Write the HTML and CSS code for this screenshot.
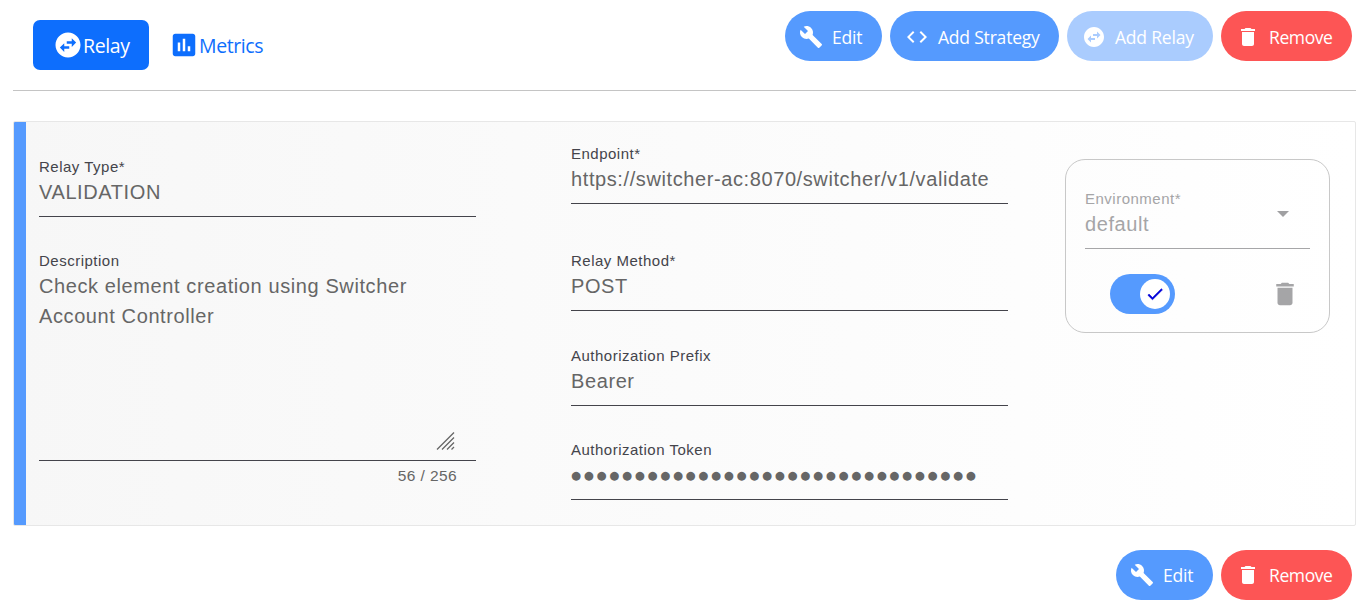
FILE: index.html
```html
<!DOCTYPE html>
<html lang="en">
<head>
<meta charset="utf-8">
<title>Relay</title>
<link rel="stylesheet" href="styles.css">
</head>
<body>
<svg class="sprite" width="0" height="0" aria-hidden="true">
  <symbol id="swap" viewBox="0 0 24 24"><path d="M22 12c0-5.52-4.48-10-10-10S2 6.48 2 12s4.480 10 10 10 10-4.480 10-10zm-7-5.500l3.500 3.500-3.500 3.500V11h-4V9h4V6.500zm-6 11L5.500 14 9 10.500V13h4v2H9v2.500z"/></symbol>
  <symbol id="chart" viewBox="0 0 24 24"><path d="M19 3H5c-1.100 0-2 .9-2 2v14c0 1.100.9 2 2 2h14c1.100 0 2-.9 2-2V5c0-1.100-.9-2-2-2zM9 17H7v-7h2v7zm4 0h-2V7h2v10zm4 0h-2v-4h2v4z"/></symbol>
  <symbol id="build" viewBox="0 0 24 24"><path d="M22.700 19l-9.100-9.100c.9-2.300.4-5-1.500-6.900-2-2-5-2.400-7.400-1.300L9 6 6 9 1.600 4.700C.4 7.100.9 10.100 2.900 12.100c1.900 1.900 4.600 2.400 6.900 1.500l9.100 9.100c.4.4 1 .4 1.400 0l2.300-2.300c.5-.4.5-1.100.1-1.400z"/></symbol>
  <symbol id="code" viewBox="0 0 24 24"><path d="M9.400 16.600L4.800 12l4.600-4.600L8 6l-6 6 6 6 1.400-1.400zm5.200 0l4.600-4.600-4.600-4.600L16 6l6 6-6 6-1.400-1.400z"/></symbol>
  <symbol id="trash" viewBox="0 0 24 24"><path d="M6 19c0 1.100.9 2 2 2h8c1.100 0 2-.9 2-2V7H6v12zM19 4h-3.500l-1-1h-5l-1 1H5v2h14V4z"/></symbol>
</svg>
<header class="toolbar">
  <nav class="tabs">
    <a class="tab tab-active"><svg class="icon-lg"><use href="#swap"/></svg><span>Relay</span></a>
    <a class="tab"><svg class="icon-lg"><use href="#chart"/></svg><span>Metrics</span></a>
  </nav>
  <div class="actions">
    <button class="btn edit"><svg class="icon"><use href="#build"/></svg><span>Edit</span></button>
    <button class="btn strategy"><svg class="icon"><use href="#code"/></svg><span>Add Strategy</span></button>
    <button class="btn relay" disabled><svg class="icon"><use href="#swap"/></svg><span>Add Relay</span></button>
    <button class="btn remove"><svg class="icon"><use href="#trash"/></svg><span>Remove</span></button>
  </div>
</header>
<main class="card">
  <section class="col col-main">
    <div class="field"><div class="label">Relay Type*</div><div class="value">VALIDATION</div></div>
    <div class="field description"><div class="label">Description</div><div class="value">Check element creation using Switcher<br>Account Controller</div>
      <svg class="grip" viewBox="0 0 20 20"><path d="M1 18.500L18 1.500M6 18.500L18 6.500M11 18.500L18 11.500M15.500 18.500L18 16"/></svg>
    </div>
    <div class="counter">56 / 256</div>
  </section>
  <section class="col col-request">
    <div class="field endpoint"><div class="label">Endpoint*</div><div class="value url">https://switcher-ac:8070/switcher/v1/validate</div></div>
    <div class="field method"><div class="label">Relay Method*</div><div class="value">POST</div></div>
    <div class="field prefix"><div class="label">Authorization Prefix</div><div class="value">Bearer</div></div>
    <div class="field"><div class="label">Authorization Token</div><div class="value token">●●●●●●●●●●●●●●●●●●●●●●●●●●●●●●●●</div></div>
  </section>
  <aside class="environment">
    <div class="field select">
      <div><div class="label">Environment*</div><div class="value">default</div></div>
      <span class="caret"></span>
    </div>
    <div class="env-actions">
      <div class="toggle"><span class="knob"><svg class="check" viewBox="0 0 24 24"><path d="M9 16.170L4.830 12l-1.420 1.410L9 19 21 7l-1.410-1.410z"/></svg></span></div>
      <svg class="icon-lg bin"><use href="#trash"/></svg>
    </div>
  </aside>
</main>
<footer class="actions actions-bottom">
  <button class="btn edit"><svg class="icon"><use href="#build"/></svg><span>Edit</span></button>
  <button class="btn remove"><svg class="icon"><use href="#trash"/></svg><span>Remove</span></button>
</footer>
</body>
</html>
```
FILE: styles.css
```css
* { box-sizing: border-box; }
body { margin: 0; padding: 0 6px 0 13px; height: 609px; overflow: hidden; background: #fff; font-family: "Liberation Sans", Arial, sans-serif; }
.sprite { display: block; }
svg { fill: currentColor; flex: none; }
.icon { width: 24px; height: 24px; }
.icon-lg { width: 30px; height: 30px; }
.toolbar { display: flex; justify-content: space-between; height: 91px; border-bottom: 1px solid #c4c4c4; }
.tabs { display: flex; padding: 20px 0 0 20px; font: 19.5px/30px "Open Sans", sans-serif; letter-spacing: -0.4px; }
.tab { display: flex; align-items: center; height: 50px; padding: 0 20px; color: #0d6efd; border-radius: 7px; }
.tab span { padding-top: 2px; }
.tab-active { width: 116px; background: #0d6efd; color: #fff; }
.actions { display: flex; gap: 8px; padding: 11px 4px 0 0; }
.btn { display: flex; align-items: center; gap: 9px; height: 50px; padding: 1px 0 0 15px; border: 0; border-radius: 25px; background: #559afe; color: #fff; font: 17.5px/26px "Open Sans", sans-serif; letter-spacing: -0.2px; white-space: nowrap; }
.btn span { padding-top: 1px; }
.edit { width: 97px; padding-left: 14px; }
.strategy { width: 169px; }
.relay { width: 146px; background: #aaccfe; }
.remove { width: 131px; background: #fd5555; letter-spacing: -0.4px; }
.card { display: flex; height: 405px; margin-top: 30px; border: 1px solid #e7e7e7; border-radius: 2px; background: linear-gradient(90deg, #559afe 12px, transparent 12px), linear-gradient(90deg, #f7f7f7, #fff); }
.col { width: 437px; }
.col-main { margin-left: 25px; padding-top: 35px; }
.col-request { margin-left: 95px; padding-top: 22px; }
.field { height: 60px; border-bottom: 1px solid #44444b; }
.label { font-size: 15px; line-height: 20px; letter-spacing: 0.5px; color: #44444b; white-space: nowrap; }
.value { font-size: 20px; line-height: 30px; letter-spacing: 0.6px; color: #666; white-space: nowrap; }
.description { display: flex; flex-direction: column; height: 210px; margin-top: 34px; }
.grip { width: 20px; height: 20px; margin: auto 20px 9px auto; fill: none; stroke: #666; stroke-width: 1.3; }
.counter { padding: 5px 19px 0 0; text-align: right; font-size: 15.5px; line-height: 20px; letter-spacing: 0.4px; color: #666; }
.url { width: 418px; overflow: hidden; }
.endpoint { margin-bottom: 47px; }
.method { margin-bottom: 35px; }
.prefix { margin-bottom: 34px; }
.token { font-family: "DejaVu Sans", sans-serif; font-size: 11.5px; letter-spacing: 2.7px; }
.environment { width: 265px; height: 174px; margin: 37px 0 0 57px; padding: 29px 19px 0; border: 1px solid #c8c8c8; border-radius: 20px; }
.select { display: flex; justify-content: space-between; border-color: #a6a6a8; }
.select .label, .select .value { color: #a5a5a7; }
.caret { width: 0; height: 0; margin: 22px 21px 0 0; border: 6px solid transparent; border-top-color: #a0a0a2; border-bottom: 0; }
.env-actions { display: flex; justify-content: space-between; align-items: center; padding: 25px 10px 0 25px; }
.toggle { display: flex; justify-content: flex-end; width: 65px; height: 40px; padding: 5px; border-radius: 20px; background: #559afe; }
.knob { display: flex; align-items: center; justify-content: center; width: 30px; height: 30px; border-radius: 50%; background: #fff; }
.check { width: 20px; height: 20px; fill: #0000d8; stroke: #0000d8; stroke-width: 0.6; }
.bin { color: #a5a5a7; }
.actions-bottom { justify-content: flex-end; padding-top: 24px; }
.actions-bottom .btn { padding-top: 0; padding-bottom: 1px; }
```
